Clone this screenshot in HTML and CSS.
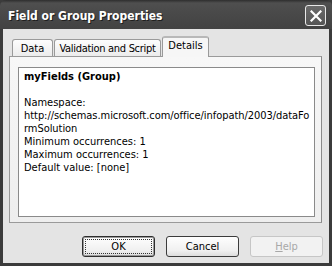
FILE: index.html
```html
<!DOCTYPE html>
<html lang="en">
<head>
    <meta charset="UTF-8">
    <title>Field or Group Properties</title>
    <link rel="stylesheet" href="styles.css">
</head>
<body>
    <div class="window">
        <div class="titlebar">
            <span class="title">Field or Group Properties</span>
            <div class="close-btn">
                <svg width="12" height="12" viewBox="0 0 12 12">
                    <path d="M1.5 1.5 L10.5 10.5 M10.5 1.5 L1.5 10.5" stroke="#fff" stroke-width="2.2" stroke-linecap="square"/>
                </svg>
            </div>
        </div>

        <div class="dialog-body">
            <div class="tabs">
                <div class="tab tab-data">Data</div>
                <div class="tab tab-validation">Validation and Script</div>
                <div class="tab tab-details active">Details</div>
            </div>

            <div class="panel">
                <div class="details-box">
                    <div class="field-name">myFields (Group)</div>
                    <div class="line">&nbsp;</div>
                    <div class="line">Namespace:</div>
                    <div class="line url">http://schemas.microsoft.com/office/infopath/2003/dataFormSolution</div>
                    <div class="line">Minimum occurrences: 1</div>
                    <div class="line">Maximum occurrences: 1</div>
                    <div class="line">Default value: [none]</div>
                </div>
            </div>

            <div class="buttons">
                <button class="btn default"><span class="focus">OK</span></button>
                <button class="btn">Cancel</button>
                <button class="btn" disabled><u>H</u>elp</button>
            </div>
        </div>
    </div>
</body>
</html>
```

FILE: styles.css
```css
body {
    margin: 0;
    font-family: "DejaVu Sans Condensed", "Liberation Sans", sans-serif;
    font-size: 11px;
    color: #000;
}
.window {
    width: 332px;
    height: 266px;
    background-color: #3b3b3b;
    display: flex;
    flex-direction: column;
}
.titlebar {
    height: 29px;
    display: flex;
    align-items: center;
    justify-content: space-between;
    padding: 0 6px 0 8px;
    box-sizing: border-box;
    background: linear-gradient(#2e2e2e 0, #4f4f4f 3px, #4a4a4a 12px, #424242 100%);
    border-radius: 6px 6px 0 0;
}
.title {
    color: #fff;
    font-family: "DejaVu Sans Condensed", "Liberation Sans", sans-serif;
    font-weight: bold;
    font-size: 12px;
    text-shadow: 1px 1px 0 #1e1e1e;
    margin-top: 2px;
}
.close-btn {
    width: 19px;
    height: 19px;
    border: 1px solid #e8e8e8;
    border-radius: 3px;
    background: linear-gradient(#6a6a6a, #555);
    display: flex;
    align-items: center;
    justify-content: center;
    margin-top: 2px;
}
.dialog-body {
    flex: 1;
    margin: 0 3px 3px;
    background-color: #e4e4e4;
    display: flex;
    flex-direction: column;
}
.tabs {
    display: flex;
    align-items: flex-end;
    margin: 7px 0 0 9px;
    height: 20px;
    position: relative;
    z-index: 1;
}
.tab {
    height: 17px;
    box-sizing: border-box;
    border: 1px solid #9a9a9a;
    border-bottom: none;
    border-radius: 3px 3px 0 0;
    background: linear-gradient(#fdfdfd, #ececec);
    line-height: 17px;
    text-align: center;
    white-space: nowrap;
    margin-right: 1px;
}
.tab-data {
    width: 41px;
}
.tab-validation {
    width: 107px;
    letter-spacing: -0.3px;
}
.tab-details {
    width: 47px;
}
.tab.active {
    height: 21px;
    margin-bottom: -1px;
    margin-left: 0;
    line-height: 16px;
    background: #f6f6f6;
    border-top: 2px solid #b8b8b8;
}
.panel {
    margin: 0 7px 0 6px;
    height: 167px;
    box-sizing: border-box;
    border: 1px solid #9a9a9a;
    border-right-color: #8a8a8a;
    background: linear-gradient(#f7f7f7, #eeeeee);
    padding: 10px 6px 5px 8px;
}
.details-box {
    height: 150px;
    box-sizing: border-box;
    border: 1px solid #8a8a8a;
    background: #fff;
    padding: 2px 2px 2px 5px;
    line-height: 13px;
}
.field-name {
    font-weight: bold;
}
.url {
    word-break: break-all;
    letter-spacing: -0.05px;
}
.buttons {
    display: flex;
    justify-content: flex-end;
    gap: 11px;
    margin: 13px 6px 0 0;
}
.btn {
    width: 73px;
    height: 21px;
    padding: 0;
    font-family: inherit;
    font-size: 11px;
    color: #000;
    border: 1px solid #3c3c3c;
    border-radius: 3px;
    background: linear-gradient(#fefefe, #f0f0f0 70%, #dcdcdc);
}
.btn.default {
    border-color: #2e2e2e;
    box-shadow: inset 0 0 0 1px #9a9a9a;
}
.btn .focus {
    display: block;
    margin: 2px;
    line-height: 13px;
    border: 1px dotted #333;
}
.btn:disabled {
    color: #a8a8a8;
    border-color: #c6c6c6;
    background: #f2f2f2;
}
```
